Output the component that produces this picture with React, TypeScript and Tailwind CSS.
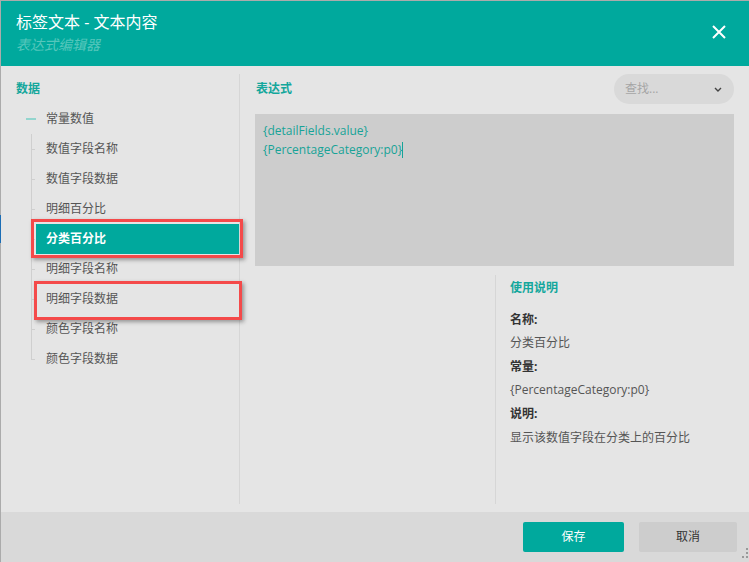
export default function App() {
  const items = [
    "数值字段名称",
    "数值字段数据",
    "明细百分比",
    "分类百分比",
    "明细字段名称",
    "明细字段数据",
    "颜色字段名称",
    "颜色字段数据",
  ];
  return (
    <div className="relative w-[749px] h-[562px] overflow-hidden bg-[#ababab] pt-px pl-px flex flex-col font-['Open_Sans','Noto_Sans_CJK_SC',sans-serif]">
      {/* header */}
      <div className="h-[65px] shrink-0 bg-[#00a99d] flex justify-between px-[15px]">
        <div className="pt-[10px]">
          <div className="text-[16px] leading-[22px] text-white">标签文本 - 文本内容</div>
          <div className="mt-[2px] text-[14px] leading-[20px] italic text-[#55c6bb]">表达式编辑器</div>
        </div>
        <svg width="14" height="14" viewBox="0 0 14 14" className="mt-[24px] mr-[8px]">
          <path d="M1 1 L13 13 M13 1 L1 13" stroke="white" strokeWidth="2" />
        </svg>
      </div>

      {/* body */}
      <div className="flex-1 flex bg-[#e5e5e5]">
        {/* left column */}
        <div className="w-[238px] shrink-0 pt-[13px]">
          <div className="ml-[15px] text-[12px] leading-[20px] font-bold text-[#14a79c]">数据</div>
          <div className="mt-[5px] h-[30px] flex items-center">
            <div className="ml-[25px] w-[10px] h-[2px] bg-[#93d5ce]" />
            <div className="ml-[10px] text-[12px] text-[#555]">常量数值</div>
          </div>
          <div className="relative">
            <div className="absolute left-[30px] top-0 bottom-[15px] w-px bg-[#cfcfcf]" />
            {items.map((t) => {
              const sel = t === "分类百分比";
              return (
                <div key={t} className="relative h-[30px] flex items-center">
                  <div className="absolute left-[30px] top-[15px] w-[4px] h-px bg-[#cfcfcf]" />
                  <div
                    className={
                      sel
                        ? "relative z-10 ml-[35px] w-[204px] h-[30px] flex items-center pl-[10px] bg-[#00a99d] text-white text-[12px] font-bold"
                        : "ml-[35px] w-[204px] h-[30px] flex items-center pl-[10px] text-[#555] text-[12px]"
                    }
                  >
                    {t}
                  </div>
                </div>
              );
            })}
          </div>
        </div>
        <div className="w-px bg-[#d6d6d6] my-[8px]" />

        {/* right column */}
        <div className="flex-1 flex flex-col px-[15px] pt-[8px] pb-[8px]">
          <div className="h-[30px] flex justify-between items-center">
            <div className="ml-px text-[12px] font-bold text-[#14a79c]">表达式</div>
            <div className="w-[120px] h-[30px] rounded-full bg-[#d9d9d9] flex items-center justify-between pl-[11px] pr-[12px]">
              <span className="text-[12px] text-[#a5a5a5]">查找...</span>
              <svg width="8" height="5" viewBox="0 0 8 5">
                <path d="M1 1 L4 4 L7 1" stroke="#444" strokeWidth="1.4" fill="none" />
              </svg>
            </div>
          </div>
          <div className="mt-[10px] h-[152px] shrink-0 bg-[#cdcdcd] px-[8px] pt-[7px] text-[12px] leading-[19px] text-[#17a397]">
            <div>{"{detailFields.value}"}</div>
            <div className="flex items-center">
              <span>{"{PercentageCategory:p0}"}</span>
              <span className="inline-block w-px h-[16px] bg-[#17a397]" />
            </div>
          </div>
          <div className="mt-[9px] flex-1 flex">
            <div className="w-[240px] shrink-0" />
            <div className="w-px bg-[#d6d6d6]" />
            <div className="pl-[14px] pt-[3px] text-[12px]">
              <div className="leading-[20px] font-bold text-[#14a79c]">使用说明</div>
              <div className="mt-[10px] leading-[23.4px]">
                <div className="font-bold text-[#333]">名称:</div>
                <div className="text-[#555]">分类百分比</div>
                <div className="font-bold text-[#333]">常量:</div>
                <div className="text-[#555]">{"{PercentageCategory:p0}"}</div>
                <div className="font-bold text-[#333]">说明:</div>
                <div className="text-[#555] mt-[1px]">显示该数值字段在分类上的百分比</div>
              </div>
            </div>
          </div>
        </div>
      </div>

      {/* footer */}
      <div className="h-[50px] shrink-0 bg-[#d9d9d9] flex justify-end items-center gap-[15px] pr-[12px]">
        <div className="w-[101px] h-[30px] rounded-[2px] bg-[#00a99d] flex items-center justify-center text-[12px] text-white">保存</div>
        <div className="w-[98px] h-[30px] rounded-[2px] bg-[#cdcdcd] flex items-center justify-center text-[12px] text-[#333]">取消</div>
      </div>

      {/* background peeking at left edge */}
      <div className="absolute left-0 top-[215px] w-px h-[28px] bg-[#1b6db5]" />

      {/* resize grip */}
      <svg width="8" height="12" viewBox="0 0 8 12" className="absolute right-[1px] bottom-[2px]">
        <rect x="6" y="0" width="2" height="2" fill="#999" />
        <rect x="6" y="4" width="2" height="2" fill="#999" />
        <rect x="6" y="8" width="2" height="2" fill="#999" />
        <rect x="2" y="8" width="2" height="2" fill="#999" />
      </svg>

      {/* red annotation boxes */}
      <div className="absolute left-[31px] top-[219px] w-[212px] h-[39px] border-[3px] border-[#f44a4a] shadow-[2px_2px_4px_rgba(0,0,0,0.35)] z-20" />
      <div className="absolute left-[34px] top-[281px] w-[208px] h-[39px] border-[3px] border-[#f44a4a] shadow-[2px_2px_4px_rgba(0,0,0,0.35)] z-20" />
    </div>
  );
}
